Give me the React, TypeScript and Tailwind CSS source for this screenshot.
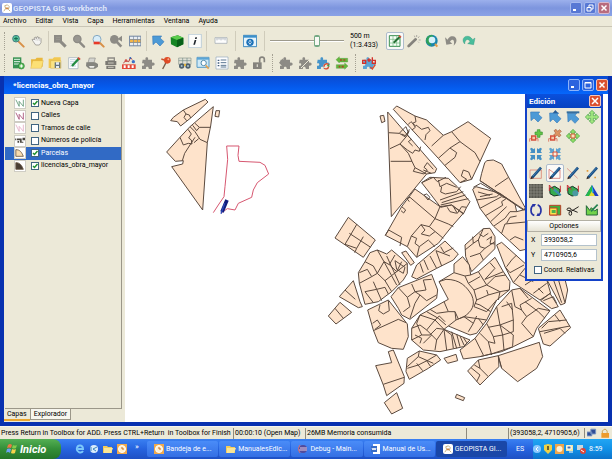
import { useState } from "react";
import type { ReactNode } from "react";

const G = "#8d8b85";

function Svg({ children, size = 14 }: { children: ReactNode; size?: number }) {
  return (
    <svg width={size} height={size} viewBox="0 0 42 42" fill="none" className="block shrink-0" aria-hidden="true">
      {children}
    </svg>
  );
}

function Lens({ ring, glass, handle }: { ring: string; glass: string; handle: string }) {
  return (
    <Svg>
      <path d="M21 23 36 38" stroke={handle} strokeWidth="7" strokeLinecap="round" />
      <circle cx="16" cy="15" r="11" fill={glass} stroke={ring} strokeWidth="4" />
    </Svg>
  );
}

const PUZZLE = "M5 11H14C10 2 24 1 21 11H33V20C43 16 44 31 33 29V39H23C25 30 12 30 15 39H3V29C12 31 12 19 3 22Z";

function Puzzle({ color = G, children }: { color?: string; children?: ReactNode }) {
  return (
    <Svg>
      <path d={PUZZLE} fill={color} />
      {children}
    </Svg>
  );
}

const ArrowNW = ({ y = 0 }: { y?: number }) => (
  <path
    d="M5 6H32L27 12 39 23 27 36 15 24 6 32Z"
    transform={`translate(0 ${y})`}
    fill="#4c9ad6"
    stroke="#3a7dbb"
    strokeWidth="2"
  />
);

const CROSS = "M21 1 30 10H25V17H32V12L41 21 32 30V25H25V32H30L21 41 12 32H17V25H10V30L1 21 10 12V17H17V10H12Z";

const SNAP_ARROWS =
  "M3 5 8 2 14 7 18 3V18H3L7 13ZM39 5 34 2 28 7 24 3V18H39L35 13ZM3 37 8 40 14 35 18 39V24H3L7 29ZM39 37 34 40 28 35 24 39V24H39L35 29Z";

const icons: Record<string, ReactNode> = {
  zoom: (
    <Svg>
      <path d="M22 22 38 38" stroke="#d89048" strokeWidth="6" strokeLinecap="round" />
      <circle cx="15" cy="14" r="10" fill="#58c8a0" stroke="#487c80" strokeWidth="3" />
      <path d="M15 8V20M9 14H21" stroke="#14684c" strokeWidth="3" />
    </Svg>
  ),
  hand: (
    <Svg>
      <path d="M10 23 6 17 10 15 13 18V11L17 9 19 14 21 8 25 9 26 14 30 11 33 14V26L28 33H17Z" fill="#f4f4f2" stroke="#85827c" strokeWidth="2" />
      <path d="M18 14V20M23 14V20M28 15V21" stroke="#98958e" />
    </Svg>
  ),
  zoomGray: (
    <Svg>
      <path d="M3 3H27V26H3Z" fill={G} />
      <path d="M22 22 38 38" stroke={G} strokeWidth="9" />
      <path d="M9 10H21M9 16H21" stroke="#a09e96" strokeWidth="2" />
    </Svg>
  ),
  lensGray: <Lens ring={G} glass="#989690" handle={G} />,
  lensRed: (
    <Svg>
      <path d="M24 24 38 38" stroke="#d89048" strokeWidth="6" strokeLinecap="round" />
      <circle cx="18" cy="16" r="12" fill="#d8edf8" stroke="#85a9c2" strokeWidth="3" />
      <path d="M8 23H26V31H8Z" fill="#e83a28" />
    </Svg>
  ),
  lensPrev: (
    <Svg>
      <path d="M22 22 37 38" stroke={G} strokeWidth="8" />
      <circle cx="16" cy="16" r="13" fill={G} />
      <path d="M39 5 26 14 39 23Z" fill={G} />
    </Svg>
  ),
  table: (
    <Svg>
      <path d="M3 5H39V37H3Z" fill="#7b8da4" />
      <path d="M6 8H16V15H6ZM18 8H27V15H18ZM29 8H37V15H29ZM6 27H16V34H6ZM18 27H27V34H18ZM29 27H37V34H29Z" fill="#e8edf2" />
      <path d="M6 17H16V25H6ZM18 17H27V25H18ZM29 17H37V25H29Z" fill="#f4b548" />
    </Svg>
  ),
  arrow: <Svg><ArrowNW /></Svg>,
  cube: (
    <Svg>
      <path d="M2 10 23 4 40 11V31L21 40 3 31Z" fill="#168524" />
      <path d="M2 10 23 4 40 11 21 18Z" fill="#5ccc4d" />
      <path d="M21 18 40 11V31L21 40Z" fill="#086018" />
    </Svg>
  ),
  info: (
    <Svg>
      <path d="M2 1H40V41H2Z" fill="#fcfcfa" stroke="#a4bdd1" strokeWidth="2" />
      <path d="M22 10H27L26 15H21ZM20 18H25L21 32H16Z" fill="#20262c" />
    </Svg>
  ),
  ruler: (
    <Svg>
      <path d="M3 11H39V28H3Z" fill="#fdfdfd" stroke="#98a3ae" strokeWidth="2" />
      <path d="M9 12V19M15 12V17M21 12V19M27 12V17M33 12V19" stroke="#8b96a1" strokeWidth="2" />
    </Svg>
  ),
  target: (
    <Svg>
      <path d="M1 4H41V38H1Z" fill="#e6f4fc" stroke="#3a86bd" strokeWidth="3" />
      <path d="M2 5H40V11H2Z" fill="#3b90cb" />
      <circle cx="21" cy="25" r="11" fill="#1b71b8" />
      <path d="M21 17 26 25 21 32 16 25Z" fill="#fff" />
      <circle cx="21" cy="25" r="3" fill="#1b71b8" />
    </Svg>
  ),
  editMap: (
    <Svg>
      <path d="M4 5H36V37H4Z" fill="#f8fff6" stroke="#398e50" strokeWidth="3" />
      <path d="M4 16H36M4 27H36M15 5V37M26 5V37" stroke="#70b680" strokeWidth="2" />
      <path d="M17 26 37 7" stroke="#277135" strokeWidth="6" />
      <path d="M33 5 39 10" stroke="#db5341" strokeWidth="5" />
    </Svg>
  ),
  wand: (
    <Svg>
      <path d="M5 36 26 16" stroke="#85837d" strokeWidth="8" strokeLinecap="round" />
      <path d="M29 3V9M37 7 33 12M41 18 35 18M22 5 24 10M36 26 33 23" stroke="#8d8b85" strokeWidth="2" />
    </Svg>
  ),
  globe: (
    <Svg>
      <circle cx="20" cy="20" r="18" fill="#1986ae" />
      <path d="M4 13C11 0 22 2 25 5L14 20 20 35C8 34 0 25 4 13Z" fill="#31a05a" />
      <circle cx="21" cy="18" r="10" fill="#d5f1fa" />
      <path d="M30 30 37 38" stroke="#e49d4c" strokeWidth="6" />
    </Svg>
  ),
  undo: (
    <Svg>
      <path d="M3 10 7 32 25 29 18 23C26 12 33 18 29 35 45 20 36 3 22 7 16 9 13 13 11 17Z" fill={G} />
    </Svg>
  ),
  redo: (
    <Svg>
      <path d="M39 12 35 32 17 29 24 23C19 12 9 15 8 30-3 18 6 4 19 7 26 9 29 13 32 17Z" fill="#49bd9b" stroke="#288d74" />
    </Svg>
  ),
  newMap: (
    <Svg>
      <path d="M6 4H31V37H6Z" fill="#389252" />
      <path d="M9 10H27M9 17H27M9 24H25" stroke="#e5f5e8" strokeWidth="3" />
      <circle cx="31" cy="30" r="9" fill="#5bbd59" stroke="#267b35" strokeWidth="2" />
      <path d="M31 25V35M26 30H36" stroke="#fff" strokeWidth="3" />
    </Svg>
  ),
  folder: (
    <Svg>
      <path d="M3 10H16L20 5H38V32H4Z" fill="#e9b83c" />
      <path d="M2 37 8 14H40L34 37Z" fill="#fce075" stroke="#d7a332" />
    </Svg>
  ),
  folderSave: (
    <Svg>
      <path d="M2 8H14L18 4H38V36H2Z" fill="#f2c850" />
      <path d="M8 14H39V37H8Z" fill="#fae284" stroke="#c69736" />
      <path d="M20 19H37V36H20Z" fill="#66737c" />
      <path d="M24 19H33V26H24ZM24 30H33V36H24Z" fill="#e7edf2" />
    </Svg>
  ),
  editDoc: (
    <Svg>
      <path d="M5 5H33V38H5Z" fill="#fff" stroke="#98a9b7" strokeWidth="2" />
      <path d="M9 11H26M9 17H22M9 23H20M9 30H27" stroke="#a3bfd3" strokeWidth="2" />
      <path d="M15 30 35 8" stroke="#238c43" strokeWidth="7" />
      <path d="M33 5 39 11" stroke="#d04a37" strokeWidth="6" />
    </Svg>
  ),
  print: (
    <Svg>
      <path d="M13 6H31L27 20H9Z" fill="#d4d4cf" stroke={G} strokeWidth="2" />
      <path d="M4 19H30L39 24V32L30 38H12L3 30Z" fill="#85857f" />
      <path d="M12 30H29L26 35H15Z" fill="#eeeeea" />
    </Svg>
  ),
  lockPrint: (
    <Svg>
      <path d="M12 6H31V15H12Z" stroke={G} strokeWidth="4" />
      <path d="M4 15H37V27H4ZM7 29H34V39H7Z" fill="#7b7973" />
      <path d="M12 21H29M12 34H29" stroke="#cbc8bd" strokeWidth="3" />
    </Svg>
  ),
  factory: (
    <Svg>
      <path d="M0 25H41V39H0Z" fill="#e44838" />
      <path d="M5 28H11V36H5ZM17 28H23V36H17ZM29 28H35V36H29Z" fill="#fff" />
      <path d="M4 21 12 14 20 17 25 6 31 10" stroke="#b33838" strokeWidth="3" />
      <circle cx="12" cy="14" r="4" fill="#d3524a" />
      <circle cx="25" cy="6" r="3" fill="#3366b8" />
      <circle cx="34" cy="17" r="5" fill="#3a70c8" />
    </Svg>
  ),
  puzzle: <Puzzle />,
  pin: (
    <Svg>
      <path d="M21 20 11 39" stroke="#785b47" strokeWidth="4" />
      <circle cx="25" cy="13" r="10" fill="#df4b26" />
      <path d="M7 9 16 12" stroke="#c9502e" strokeWidth="4" />
      <circle cx="28" cy="10" r="3" fill="#f6ad8d" />
    </Svg>
  ),
  binoculars: (
    <Svg>
      <path d="M2 6H39V25H2Z" fill="#e1e1d6" stroke="#88948b" strokeWidth="2" />
      <path d="M2 14H39M14 6V24M27 6V24" stroke="#718d88" strokeWidth="2" />
      <circle cx="11" cy="30" r="8" fill="#4d606c" />
      <circle cx="30" cy="30" r="8" fill="#4d606c" />
      <path d="M18 23H24V30H18Z" fill="#dfb542" />
      <circle cx="11" cy="30" r="3" fill="#abc4cd" />
      <circle cx="30" cy="30" r="3" fill="#abc4cd" />
    </Svg>
  ),
  viewMap: (
    <Svg>
      <path d="M3 4H39V34H3Z" fill="#cee9f7" stroke="#579ac8" strokeWidth="3" />
      <path d="M3 6H39V11H3Z" fill="#5ba5d6" />
      <circle cx="23" cy="21" r="8" fill="#fff" stroke="#538bad" strokeWidth="3" />
      <path d="M29 28 38 38" stroke="#e2a354" strokeWidth="5" />
    </Svg>
  ),
  list: (
    <Svg>
      <path d="M3 3H39V39H3Z" fill="#fff" stroke="#93a7bb" strokeWidth="2" />
      <path d="M8 11H13V15H8ZM8 19H13V23H8ZM8 27H13V31H8Z" fill="#405c7c" />
      <path d="M17 12H34M17 20H34M17 28H34M17 33H34" stroke="#5b7692" strokeWidth="3" />
    </Svg>
  ),
  unlock: (
    <Svg>
      <path d="M3 19H29V39H3Z" fill="#85837d" />
      <path d="M23 20V10C23 1 37 1 37 10V19" stroke="#85837d" strokeWidth="5" />
      <path d="M14 25H18V33H14Z" fill="#d8d5ca" />
    </Svg>
  ),
  puzzleLeft: <Puzzle><path d="M0 20 13 6V34Z" fill={G} /></Puzzle>,
  puzzleCut: <Puzzle><path d="M9 36 38 7" stroke="#ece9d8" strokeWidth="3" /></Puzzle>,
  puzzleBlue: (
    <Puzzle color="#4694c9">
      <circle cx="31" cy="31" r="9" fill="#ece9d8" />
      <path d="M24 32C24 22 36 21 38 27M38 31C37 40 27 40 25 36" stroke="#d9492d" strokeWidth="4" />
      <path d="M32 29 40 24V33Z" fill="#3aa047" />
    </Puzzle>
  ),
  swap: (
    <Svg>
      <path d="M3 11 13 2V7H38V18H13V21ZM39 30 29 21V26H4V37H29V40Z" fill="#64b83b" stroke="#448b32" />
      <path d="M15 12H21M25 12H31M11 32H16M20 32H26" stroke="#ad4529" strokeWidth="5" />
    </Svg>
  ),
  abPuzzle: (
    <Puzzle color="#5ba4d3">
      <path d="M2 13H11V22H2ZM31 4V22H40V13H31M16 12H27M21 7V18" stroke="#d53028" strokeWidth="4" />
      <path d="M25 33 31 39 40 26" stroke="#d9492d" strokeWidth="4" />
    </Puzzle>
  ),
  arrowUp: <Svg><ArrowNW y={3} /><path d="M14 10 22 0 31 10Z" fill="#285e96" /></Svg>,
  arrowBar: <Svg><ArrowNW y={4} /><path d="M2 4H40V10H2Z" fill="#356e9d" /></Svg>,
  move: <Svg><path d={CROSS} fill="#a3e780" stroke="#46a246" strokeWidth="2" /></Svg>,
  addVertex: (
    <Svg>
      <path d="M18 9H25V2H33V9H40V17H33V25H25V17H18Z" fill="#65c548" stroke="#389632" strokeWidth="2" />
      <path d="M2 38V29H8M20 29H27V37" stroke="#d54f3b" strokeWidth="2" />
      <path d="M8 21H20V33H8Z" fill="#f3c9a8" stroke="#d54f3b" strokeWidth="4" />
    </Svg>
  ),
  delVertex: (
    <Svg>
      <path d="M18 5 24 1 29 7 35 2 40 7 34 13 39 19 33 24 28 18 22 23 17 18 23 12Z" fill="#dd9362" stroke="#a76244" strokeWidth="2" />
      <path d="M2 38V29H8M20 29H27V37" stroke="#d54f3b" strokeWidth="2" />
      <path d="M8 21H20V33H8Z" fill="#f3c9a8" stroke="#d54f3b" strokeWidth="4" />
    </Svg>
  ),
  moveVertex: (
    <Svg>
      <path d={CROSS} fill="#90dc65" stroke="#46a246" strokeWidth="2" />
      <path d="M15 15H27V27H15Z" fill="#f7e2bd" stroke="#d55737" strokeWidth="3" />
    </Svg>
  ),
  snap: <Svg><path d={SNAP_ARROWS} fill="#438fc4" /></Svg>,
  snapVertex: (
    <Svg>
      <path d={SNAP_ARROWS} fill="#60a3cf" />
      <path d="M15 15H27V27H15Z" fill="#f8f0df" stroke="#d54c38" strokeWidth="3" />
    </Svg>
  ),
  drawRect: <Pen><path d="M3 12H37V37H3Z" stroke="#d96b5a" strokeWidth="2" /></Pen>,
  drawPoly: <Pen><path d="M3 10V37H36V12L20 22Z" stroke="#d35750" strokeWidth="2" /></Pen>,
  drawLine: <Pen><path d="M3 7 35 37M3 37 14 30" stroke="#d97970" strokeWidth="2" /></Pen>,
  drawPoint: <Pen><path d="M5 12H10V17H5ZM28 32H33V37H28Z" fill="#e19b3a" /></Pen>,
  grid: (
    <Svg>
      <path d="M0 0H42V42H0Z" fill="#57574f" />
      <path d="M6 0V42M15 0V42M24 0V42M33 0V42M0 6H42M0 15H42M0 24H42M0 33H42" stroke="#8f8f86" strokeWidth="2" />
    </Svg>
  ),
  snapShape: <Snap />,
  snapShape2: <Snap flip />,
  triangle: (
    <Svg>
      <path d="M21 3 41 36H1Z" fill="#1d3bc7" />
      <path d="M21 3 1 36H21Z" fill="#25b94a" />
      <path d="M21 20 30 36H12Z" fill="#e4dc34" />
      <path d="M21 3 26 23 21 28Z" fill="#29b6d8" />
    </Svg>
  ),
  rotate: (
    <Svg>
      <path d="M16 37C3 33 3 12 14 6M26 5C39 10 39 31 28 37" stroke="#2633a6" strokeWidth="5" />
      <path d="M9 3H21L15 13ZM33 39H22L27 29Z" fill="#2633a6" />
    </Svg>
  ),
  scale: (
    <Svg>
      <path d="M5 7H38V36H5Z" fill="#3fb13c" stroke="#ba4129" strokeWidth="3" />
      <path d="M5 15H27V36H5Z" fill="#f9e44e" stroke="#ba4129" strokeWidth="3" />
      <path d="M11 21H23V30H11Z" fill="#4fb24a" />
    </Svg>
  ),
  scissors: (
    <Svg>
      <path d="M14 26 38 11M16 20 35 28" stroke="#24221e" strokeWidth="3" />
      <ellipse cx="9" cy="19" rx="6" ry="4" stroke="#24221e" strokeWidth="3" />
      <ellipse cx="13" cy="31" rx="4" ry="6" stroke="#24221e" strokeWidth="3" />
    </Svg>
  ),
  chartEdit: (
    <Svg>
      <path d="M4 8V36H37V18L29 24 19 14 14 22Z" fill="#72d34a" stroke="#246839" strokeWidth="3" />
      <path d="M18 25 38 5" stroke="#248250" strokeWidth="5" />
    </Svg>
  ),
};

function Pen({ children }: { children: ReactNode }) {
  return (
    <Svg>
      {children}
      <path d="M10 34 36 5" stroke="#174e85" strokeWidth="8" />
      <path d="M12 30 34 6" stroke="#5893bf" strokeWidth="2" />
      <path d="M4 40 7 31 14 37Z" fill="#302b2b" />
    </Svg>
  );
}

function Snap({ flip = false }: { flip?: boolean }) {
  return (
    <Svg>
      <path d="M5 13 20 7 36 17 34 33 18 36 6 29Z" fill="#36ac50" stroke="#173328" strokeWidth="3" />
      <path d="M4 3V21M4 3 17 17M37 5V24" stroke="#c72f35" strokeWidth="3" />
      {flip ? <circle cx="28" cy="28" r="9" fill="#4a9aa2" /> : <path d="M18 16 38 34" stroke="#3f8fb0" strokeWidth="7" />}
    </Svg>
  );
}

function Tool({ name, label, on = false }: { name: string; label: string; on?: boolean }) {
  return (
    <button
      type="button"
      aria-label={label}
      className={
        on
          ? "flex h-[18px] w-[18px] items-center justify-center rounded-xs border border-[#aebccc] bg-[#fafaf8]"
          : "flex h-[18px] w-[18px] items-center justify-center"
      }
    >
      {icons[name]}
    </button>
  );
}

const Sep = () => <span className="mx-[2px] h-5 w-px bg-[#d0ccbb]" />;
const Grip = () => <span className="mx-1 h-[18px] w-px border-l border-dotted border-[#a5a193]" />;

const windowTools = ["Minimizar", "Maximizar", "Cerrar"];

function WindowButtons({ dim = false }: { dim?: boolean }) {
  return (
    <div className="flex gap-[2px]">
      {windowTools.map((label, i) => (
        <button
          key={label}
          type="button"
          aria-label={label}
          className={
            "flex h-3 w-3 items-center justify-center rounded-xs border " +
            (i === 2
              ? dim
                ? "border-[#d9b7ca] bg-[#b86b7d]"
                : "border-[#f1c3b6] bg-[#dc5130]"
              : dim
                ? "border-[#a6b9ee] bg-[#5878d4]"
                : "border-[#8cb3fa] bg-[#2c63de]")
          }
        >
          <svg width="8" height="8" viewBox="0 0 8 8" stroke="#fff" fill="none" aria-hidden="true">
            {i === 0 && <path d="M1 6H4" strokeWidth="2" />}
            {i === 1 && (dim ? <path d="M3 3V1H7V5H5M1 3.5H5V7H1Z" /> : <path d="M1 1.5H7V7H1ZM1 2H7" />)}
            {i === 2 && <path d="M1.500 1.500 6.500 6.500M6.500 1.500 1.500 6.500" strokeWidth="1.500" />}
          </svg>
        </button>
      ))}
    </div>
  );
}

const layers = [
  { name: "Nueva Capa", color: "#5c9672", on: true },
  { name: "Calles", color: "#a54c75", on: false },
  { name: "Tramos de calle", color: "#e5adc5", on: false },
  { name: "Números de policía", color: "points", on: false },
  { name: "Parcelas", color: "#f8dcae", on: true, selected: true },
  { name: "licencias_obra_mayor", color: "#483d33", on: true },
];

function LayerSwatch({ color }: { color: string }) {
  const area = color === "#f8dcae" || color === "#483d33";
  return (
    <svg width="12" height="12" viewBox="0 0 12 12" className="block border border-[#cfcdc4] bg-white" aria-hidden="true">
      {color === "points" ? (
        <path d="M0 3H1V5H0ZM2 3H6V5H2ZM6 3H8V7H6ZM9 2H12V5H9ZM3 6H5V8H3ZM6 7H10V8H6Z" fill="#4b4840" />
      ) : area ? (
        <path d="M1 2C6 2 8 5 10 10H1Z" fill={color} stroke="#695743" />
      ) : (
        <path d="M1 2 5 10V4L10 10V2" fill="none" stroke={color} />
      )}
    </svg>
  );
}

function Check({ checked, onChange, id }: { checked: boolean; onChange: () => void; id: string }) {
  return (
    <span className="grid shrink-0">
      <input
        id={id}
        type="checkbox"
        checked={checked}
        onChange={onChange}
        className="col-start-1 row-start-1 h-2 w-2 appearance-none border border-[#416581] bg-white"
      />
      {checked && (
        <svg viewBox="0 0 8 8" className="pointer-events-none col-start-1 row-start-1 h-2 w-2" aria-hidden="true">
          <path d="M2 4 3.500 5.500 6.500 2" fill="none" stroke="#229030" strokeWidth="1.500" />
        </svg>
      )}
    </span>
  );
}

function LayerPanel() {
  const [on, setOn] = useState(layers.map((l) => l.on));
  return (
    <aside className="flex w-[121px] shrink-0 flex-col bg-[#ece9d8]">
      <div className="mr-[3px] ml-px flex-1 border-r border-b border-[#9b9789] pt-[3px]">
        <ul className="grid h-[75px] auto-rows-fr">
          {layers.map((l, i) => (
            <li
              key={l.name}
              className={
                l.selected
                  ? "flex items-center gap-[5px] bg-[#316ac5] pl-[9px] text-white"
                  : "flex items-center gap-[5px] pl-[9px] text-black"
              }
            >
              <LayerSwatch color={l.color} />
              <div className="flex items-center gap-[2px]">
                <Check id={`layer-${i}`} checked={on[i]} onChange={() => setOn(on.map((v, j) => (j === i ? !v : v)))} />
                <label htmlFor={`layer-${i}`} className="whitespace-nowrap">{l.name}</label>
              </div>
            </li>
          ))}
        </ul>
      </div>
      <div role="tablist" className="flex h-[13px] items-start">
        <button type="button" role="tab" aria-selected="true" className="h-3 border-b-2 border-[#eaa62e] px-[3px] leading-[11px]">
          Capas
        </button>
        <button type="button" role="tab" aria-selected="false" className="h-[11px] border border-t-0 border-[#9b9789] bg-[#f7f6ef] px-[3px] leading-[9px]">
          Explorador
        </button>
      </div>
    </aside>
  );
}

/* Blocks and plot boundaries are stored on a grid of three units per pixel. */
const westBlocks =
  "M62 92 70 82 100 60 166 28 174 36 122 84 92 108 82 95ZM190 50 182 108 172 158 158 360 65 230 98 222 100 212 76 214 50 186 90 142 120 110ZM198 62 209 62 206 81 195 79Z";
const westLines =
  "M100 60 108 72 118 75 122 84M108 72 102 82 110 92M120 110 135 125 150 148 172 158M148 112H181M135 100 148 112 140 122 128 106M90 142 100 165 115 160 126 162 124 150 116 144 124 132 114 118M135 142 120 165 104 190 97 212M146 146 132 158";

const northBlocks = [
  "M203 66 350 236 345 248 320 252 214 380 205 128Z",
  "M180 78 191 76 195 94 185 98Z",
  "M220 58 230 48 285 78 320 90 370 136 395 125 444 95 512 145 480 215 455 268 420 278 355 205 300 145Z",
  "M500 212 520 210 545 222 566 262 615 352 614 360 480 272 485 250 494 219Z",
  "M458 298 468 290 540 310 585 342 590 365 618 358 618 478 600 482 520 408 480 355Z",
  "M305 278 330 262 385 265 412 290 450 335 440 352 430 372 395 345 362 352 330 310Z",
  "M285 297 360 350 395 345 430 370 395 410 355 460 290 502 262 470 196 436 245 350Z",
  "M45 444 85 382 166 450 130 502Z",
  "M435 465 490 416 510 415 525 440 525 476 455 545 437 500Z",
];
const northLines =
  "M205 128 238 130 250 117M238 130 255 140 267 125M210 176 240 162 262 136 268 118M240 162 265 190 276 214 285 233 320 252M212 214H276M240 162 262 180 278 190 285 180 298 184 302 170M262 136 274 148 265 155 278 168M285 233 280 244 312 252 322 240 312 232 322 218 340 238M310 240 334 250M285 78 288 95 278 100 286 112 276 120M288 105 305 118 325 112 330 122 318 134 315 150M264 104 273 95 288 109M250 117 258 110 264 126 256 137 245 132M370 136 335 168M395 125 420 155 465 188 480 215M355 205 390 174 420 155M390 174 410 188 405 202 375 226M424 258 430 240 446 246 455 268M424 258 440 268 420 278M525 290 566 262M480 272 610 360M460 292 482 280 545 318M474 306 510 316M480 320 518 312M470 330 530 320 540 311M480 355 545 320 560 325M495 378 548 346 545 335 560 325M512 395 560 350M522 408 555 385 570 365 590 365M545 430 555 402 618 396M560 400 570 382 590 378M570 450 585 440 610 450M305 278 340 262 352 275 378 262M355 270 360 290 380 280 410 292M365 290 362 306 376 312 410 305 422 290M360 330 430 305M365 338 436 315M362 345 445 326M398 346 412 370 425 350 440 352M382 352 390 365 410 370M312 315 320 312 330 322 324 330ZM270 322 345 386 360 350M270 322 261 326 268 335M245 350 257 360 251 369 243 362M345 386 385 402 400 410M345 386 328 410 370 445M328 410 303 404 274 438 262 470M303 404 315 420 304 432 328 438 345 425M274 438 290 445 285 460 298 470 325 450 345 470M298 470 290 502M196 436 206 420 245 442 240 468M111 402 75 463M88 430 152 472M75 463 110 475 130 440M110 475 104 488M435 480 460 460 458 440M460 460 475 450 490 416M475 450 480 470 495 475 525 455M450 500 480 490 495 475M480 490 490 510M500 450 515 440 510 460 525 462M478 432 490 440 505 430";

const southBlocks = [
  "M245 38 258 33 283 68 272 76Z",
  "M150 38 172 30 200 42 215 30 262 70 262 100 250 120 215 155 175 185 135 193 118 130 115 98 135 65Z",
  "M275 110 290 75 375 3 415 42 400 60 350 85 290 117Z",
  "M58 170 100 122 120 185 127 200 115 203Z",
  "M25 228 60 187 95 217 48 252Z",
  "M143 210 205 180 262 252 265 290 250 328 215 325 175 308 160 270Z",
  "M213 170 235 143 335 103 353 150 350 175 270 238 245 225 235 205Z",
  "M357 125 402 98 402 72 428 50 448 75 452 105 475 95 525 52 550 95 570 125 568 150 530 180 500 240 470 280 450 285 385 258 372 268 450 300 430 320 360 335 310 330 275 300 275 265 300 225 385 178Z",
  "M530 15 545 7 615 70 680 118 692 160 660 180 580 128 555 80Z",
  "M680 118H735L743 150 735 190 722 195Z",
  "M662 182 690 160 715 200 695 206Z",
  "M420 330 465 295 500 250 530 200 575 150 600 145 690 212 650 265 640 290 580 320 545 335 480 350 430 357Z",
  "M655 265 720 210 752 263 690 318 670 312Z",
  "M535 347 658 307 668 350 650 385 593 425 545 385Z",
  "M443 393 475 360 535 347 537 380 505 410 480 435Z",
  "M372 355 408 343 413 362 383 370Z",
  "M410 463 434 473 430 482 406 473Z",
  "M258 395 262 355 298 333 350 345 362 360 325 385 268 418Z",
  "M167 377 215 368 205 335 220 330 253 410 252 430 200 467 190 435Z",
  "M193 488 230 458 248 505 215 522Z",
];
const southLines =
  "M172 30 192 65 230 135M135 65 160 78 172 100 192 65M118 130 155 110 172 100 195 122 215 155M155 110 142 88 118 98M195 122 230 95 262 70M192 65 208 74 225 45M208 74 230 95 245 65M225 62 255 82 250 100 230 88ZM135 155 170 148 185 182M135 155 160 188M170 148 195 142 205 162M160 125 170 148M200 48 240 135M310 98 300 70M325 90 312 60M350 85 330 48M365 78 348 32 390 48M362 20 372 38 400 24M75 150 106 178M45 205 70 235M180 195 176 212 190 222 208 212 205 182M235 143 262 172 285 155 318 150M262 172 270 200 250 215M285 155 275 132M318 150 310 120 335 118M285 190 300 165 320 182 350 165M285 190 270 235M300 165 285 155M158 250 172 240 182 255 165 268M160 272 235 238 258 248M402 98 435 108 452 105M357 125 378 118C420 118 440 140 455 165 468 195 455 215 432 230L415 237 405 215 385 215 372 185M435 108 445 130 462 150 470 180 462 200M445 130 480 110M462 150 500 135 475 95M500 135 540 155 568 150M495 118 550 95M495 118 525 85 510 68M500 135 525 110 558 105M470 180 505 165 500 150M505 165 540 155 535 180M462 200 500 215 530 180M465 190 480 195 512 215M405 215 408 240 385 258M408 240 432 230 460 250 445 275M432 230 500 240M460 250 470 228M490 255 475 235M300 225 345 240 372 268M320 215 355 235 378 255M345 240 358 228 375 245M330 208 350 220 385 215M275 265 300 255 320 270 345 240M300 225 290 250 305 285 275 300M320 270 335 285 310 310M305 285 330 285 350 265 372 268M335 285 350 300 345 330M350 300 372 268 380 330M372 268 395 285 400 325M395 275 410 325M410 282 420 320M420 288 432 315M430 292 440 308M285 285 305 295 300 310M560 80 575 60 590 45M555 80 570 98 612 75M580 128 615 85 640 115M600 105 640 125M615 135 660 105M640 160 680 130M655 145 670 160M700 118 725 188M715 118 735 188M670 182 700 170 710 190M465 295 490 345M480 280 505 305 515 345M500 250 520 290 525 310 505 305M505 262 540 255 530 200M540 255 548 285 520 290M545 200 575 190 580 240 540 255M560 185 578 210M540 255 580 285 578 318M580 240 580 275 548 285 552 330M575 150 585 200 605 210 600 195 635 175M605 210 620 230 655 205 690 212M620 230 605 250 640 290M615 185 655 215 675 235M600 145 625 175M665 265 685 245 740 240M660 275 750 258M705 225 720 245M672 280 720 265 735 280M475 360 480 385 505 410M453 383 480 405 470 425M463 375 480 385M535 350 545 385M298 333 295 350 340 370M262 380 295 350M262 385 295 375 325 360 350 345M290 370 308 392M320 362 332 380M190 433 253 412M480 350 520 340 580 320";

function TownMap() {
  const ink = { fill: "none", stroke: "#5a493e", strokeWidth: 3, strokeLinejoin: "round" as const };
  return (
    <svg width="483" height="328" viewBox="125 94 483 328" className="block" role="img" aria-label="Parcelas">
      <g transform="translate(150 90) scale(.3333)" {...ink}>
        <path d={westBlocks} fill="#fee3cb" />
        <path d={westLines} />
        <path
          d="M215 368 232 356 255 360 265 340 305 322 310 300 322 278 356 252 345 226 330 217 267 214 264 196 267 168H230L233 208 225 290 222 320 205 345 190 368"
          stroke="#d6566f"
        />
        <path d="M216 366 231 330" stroke="#111c7d" strokeWidth="11" />
        <path d="M213 371 224 340" stroke="#2d49b5" strokeWidth="4" />
      </g>
      <g transform="translate(320 90) scale(.3333)" {...ink}>
        <path d={northBlocks.join("")} fill="#fee3cb" />
        <path d={northLines} />
      </g>
      <g transform="translate(320 240) scale(.3333)" {...ink}>
        <path d={southBlocks.join("")} fill="#fee3cb" />
        <path d={southLines} />
      </g>
    </svg>
  );
}

const palette: ([string, string] | null)[] = [
  ["arrow", "Seleccionar"],
  ["arrowUp", "Seleccionar partes"],
  ["arrowBar", "Seleccionar líneas"],
  ["move", "Mover"],
  ["addVertex", "Insertar vértice"],
  ["delVertex", "Borrar vértice"],
  ["moveVertex", "Mover vértice"],
  null,
  ["snap", "Ajustar"],
  ["snapVertex", "Ajustar vértices"],
  null,
  null,
  ["drawRect", "Dibujar rectángulo"],
  ["drawPoly", "Dibujar polígono"],
  ["drawLine", "Dibujar línea"],
  ["drawPoint", "Dibujar punto"],
  ["grid", "Rejilla"],
  ["snapShape", "Autocompletar"],
  ["snapShape2", "Completar polígono"],
  ["triangle", "Triángulo"],
  ["rotate", "Rotar"],
  ["scale", "Escalar"],
  ["scissors", "Cortar"],
  ["chartEdit", "Editar geometría"],
];

function EditBox() {
  const [relative, setRelative] = useState(false);
  return (
    <section className="absolute top-0 right-[5px] w-[78px] border-2 border-t-0 border-[#1442c8] bg-[#ece9d8]">
      <header className="flex h-[14px] items-center justify-between bg-linear-to-b from-[#0a50dd] to-[#0642c0] pl-[2px]">
        <h2 className="text-[8px] font-bold text-white">Edición</h2>
        <button type="button" aria-label="Cerrar edición" className="flex h-3 w-3 items-center justify-center rounded-xs border border-[#f5c8ba] bg-[#dc5130]">
          <svg width="8" height="8" viewBox="0 0 8 8" stroke="#fff" strokeWidth="1.500" aria-hidden="true">
            <path d="M1 1 7 7M7 1 1 7" />
          </svg>
        </button>
      </header>
      <div className="grid h-[111px] auto-rows-fr grid-cols-4 items-center justify-items-center">
        {palette.map((p, i) => (p ? <Tool key={p[0]} name={p[0]} label={p[1]} on={p[0] === "drawPoly"} /> : <span key={i} />))}
      </div>
      <button type="button" className="mt-px block h-3 w-full border border-[#b3b0a4] bg-linear-to-b from-white to-[#e7e4d6] leading-[10px]">
        Opciones
      </button>
      <div className="flex flex-col gap-[3px] px-1 pt-[2px]">
        <div className="flex items-center gap-1">
          <label htmlFor="cx" className="w-[6px]">X</label>
          <input id="cx" defaultValue="393058,2" className="h-3 w-[56px] border border-[#b4c2cc] bg-white px-[2px]" />
        </div>
        <div className="flex items-center gap-1">
          <label htmlFor="cy" className="w-[6px]">Y</label>
          <input id="cy" defaultValue="4710905,6" className="h-3 w-[56px] border border-[#b4c2cc] bg-white px-[2px]" />
        </div>
      </div>
      <div className="flex h-[18px] items-center justify-center gap-[2px]">
        <Check id="rel" checked={relative} onChange={() => setRelative(!relative)} />
        <label htmlFor="rel">Coord. Relativas</label>
      </div>
    </section>
  );
}

const rowTwo: [string, string][] = [
  ["newMap", "Nuevo mapa"],
  ["folder", "Abrir"],
  ["folderSave", "Guardar"],
  ["editDoc", "Editar"],
  ["print", "Imprimir"],
  ["lockPrint", "Bloquear"],
  ["factory", "Catastro"],
  ["puzzle", "Extensión"],
  ["pin", "Localizar"],
  ["binoculars", "Buscar"],
  ["viewMap", "Vista"],
  ["list", "Atributos"],
  ["puzzle", "Capa"],
  ["unlock", "Desbloquear"],
];

function Logo() {
  return (
    <svg width="10" height="10" viewBox="0 0 11 11" className="rounded-xs bg-white" aria-hidden="true">
      <path d="M2 9 4 6 3 3 6 2 8 4 7 7 9 9" fill="none" stroke="#c0ad7c" />
      <path d="M4 5H7V7H4Z" fill="#d18845" />
    </svg>
  );
}

const tasks: { label: string; icon: ReactNode; active?: boolean }[] = [
  { label: "Bandeja de e...", icon: <Clock /> },
  {
    label: "ManualesEdic...",
    icon: <svg width="10" height="10" viewBox="0 0 10 10" aria-hidden="true"><path d="M0 2H4L5 3H9V9H0Z" fill="#f3cc59" /><path d="M1 4H10L8 9H1Z" fill="#fae698" /></svg>,
  },
  {
    label: "Debug - Main...",
    icon: <svg width="10" height="10" viewBox="0 0 10 10" aria-hidden="true"><circle cx="5" cy="5" r="4" fill="#524b9b" /><path d="M2 4H9M1 6H9" stroke="#e8cde4" /><path d="M2 1 0 5 2 9" stroke="#dc6969" fill="none" /></svg>,
  },
  {
    label: "Manual de Us...",
    icon: <svg width="10" height="10" viewBox="0 0 10 10" aria-hidden="true"><path d="M2 0H9V10H2Z" fill="#fff" /><path d="M0 2H6V8H0Z" fill="#376cc6" /><path d="M1 4 2 6 3 4 4 6 5 4" stroke="#fff" fill="none" /></svg>,
  },
  { label: "GEOPISTA GI...", icon: <Logo />, active: true },
];

function Clock() {
  return (
    <svg width="10" height="10" viewBox="0 0 10 10" aria-hidden="true">
      <path d="M0 0H10V10H0Z" fill="#efa94c" />
      <circle cx="5" cy="5" r="3.500" fill="#fff0cf" stroke="#fff" />
      <path d="M5 3V5H7" fill="none" stroke="#c66b20" />
    </svg>
  );
}

function Browser() {
  return (
    <svg width="10" height="10" viewBox="0 0 10 10" fill="none" aria-hidden="true">
      <path d="M8 7C6 10 1 8 2 4 3 0 8 1 8 5H3" stroke="#7bc8fa" strokeWidth="2" />
    </svg>
  );
}

function Taskbar() {
  return (
    <footer className="flex h-5 bg-linear-to-b from-[#3a80f2] via-[#2663df] to-[#1e50c4] text-white">
      <button type="button" className="flex w-[61px] shrink-0 items-center gap-[2px] rounded-r-lg bg-linear-to-b from-[#54b054] via-[#338e38] to-[#257529] pl-[6px] text-[11px] leading-none font-bold italic">
        <svg width="12" height="12" viewBox="0 0 12 12" aria-hidden="true">
          <path d="M2 2Q4 0 6 2L5 5Q3 4 1 5Z" fill="#ed7544" />
          <path d="M7 2Q9 3 11 2L10 5Q8 6 6 5Z" fill="#83cd4c" />
          <path d="M1 6Q3 5 5 6L4 10Q2 8 0 10Z" fill="#6da2f3" />
          <path d="M6 6Q8 7 10 6L9 10Q7 11 5 10Z" fill="#f6d34b" />
        </svg>
        Inicio
      </button>
      <nav aria-label="Inicio rápido" className="flex w-[86px] shrink-0 items-center gap-1 pl-[14px]">
        <button type="button" aria-label="Internet"><Browser /></button>
        <button type="button" aria-label="Correo">
          <svg width="10" height="10" viewBox="0 0 10 10" aria-hidden="true"><circle cx="5" cy="5" r="4" fill="#d9ecfb" /><path d="M8 3 4 5 7 7M2 3V7" stroke="#3a84bf" fill="none" /></svg>
        </button>
        <button type="button" aria-label="Carpetas">{tasks[1].icon}</button>
        <button type="button" aria-label="Agenda"><Clock /></button>
        <span className="self-start pt-1 pl-1 text-[8px] leading-none">»</span>
      </nav>
      <div className="flex min-w-0 flex-1 gap-px py-[2px]">
        {tasks.map((t) => (
          <button
            key={t.label}
            type="button"
            className={
              t.active
                ? "flex min-w-0 flex-1 items-center gap-[2px] rounded-xs bg-[#1a47a8] pl-[7px] whitespace-nowrap"
                : "flex min-w-0 flex-1 items-center gap-[2px] rounded-xs bg-linear-to-b from-[#4a8cf8] to-[#346fe4] pl-[7px] whitespace-nowrap"
            }
          >
            {t.icon}
            {t.label}
          </button>
        ))}
      </div>
      <div className="flex w-[26px] shrink-0 items-center justify-center">ES</div>
      <div className="flex w-[79px] shrink-0 items-center gap-[2px] bg-linear-to-b from-[#22a5f3] via-[#1191e7] to-[#0d73cb]">
        <svg width="54" height="12" viewBox="0 0 54 12" aria-hidden="true">
          <circle cx="4" cy="6" r="4" fill="#8ac9ff" />
          <path d="M5 4 3 6 5 8" stroke="#fff" fill="none" />
          <path d="M11 2 15 1 19 2V7L15 11 11 7Z" fill="#efd247" />
          <path d="M14 3H16V7H14Z" fill="#6d602c" />
          <path d="M22 1H31V11H22Z" fill="#eca64d" />
          <circle cx="26.500" cy="6" r="3" fill="#fff1d5" />
          <path d="M33 2H40V8H33Z" fill="#eee7aa" />
          <path d="M34 3H38V6H34ZM36 9H40" fill="#486ea8" stroke="#fff" />
          <path d="M44 2H50V7H44Z" fill="#cad8dd" />
          <circle cx="50" cy="8" r="3" fill="#dc4438" />
          <path d="M48 7 51 9" stroke="#fff" />
        </svg>
        8:59
      </div>
    </footer>
  );
}

export default function App() {
  return (
    <div className="flex min-h-screen w-full flex-col bg-[#ece9d8] font-[Roboto,'Liberation_Sans',sans-serif] text-[7px] leading-[9px] text-black">
      <header className="flex h-4 items-center justify-between bg-linear-to-b from-[#9cb0ec] via-[#7d95de] to-[#8aa2e6] pr-[2px] pl-[2px]">
        <div className="flex items-center gap-px">
          <Logo />
          <h1 className="text-[8px] font-bold text-[#dfe6fa]">GEOPISTA GIS workbench</h1>
        </div>
        <WindowButtons dim />
      </header>

      <nav aria-label="Principal" className="flex h-[11px] items-center gap-[9px] border-b border-[#c9c5b5] pl-[3px]">
        {["Archivo", "Editar", "Vista", "Capa", "Herramientas", "Ventana", "Ayuda"].map((m) => (
          <button key={m} type="button">{m}</button>
        ))}
      </nav>

      <div className="flex h-[27px] items-center">
        <Grip />
        <div className="flex w-[37px] justify-between"><Tool name="zoom" label="Zoom" /><Tool name="hand" label="Desplazar" /></div>
        <Sep />
        <div className="flex w-[93px] justify-between">
          <Tool name="zoomGray" label="Zoom a ventana" />
          <Tool name="lensGray" label="Zoom a capa" />
          <Tool name="lensRed" label="Zoom a selección" />
          <Tool name="lensPrev" label="Zoom anterior" />
          <Tool name="table" label="Tabla" />
        </div>
        <Sep />
        <div className="flex w-[55px] justify-between">
          <Tool name="arrow" label="Seleccionar entidades" />
          <Tool name="cube" label="Elementos" />
          <Tool name="info" label="Información" />
        </div>
        <Sep />
        <div className="flex w-6 justify-center"><Tool name="ruler" label="Medir" /></div>
        <Sep />
        <div className="flex w-6 justify-center"><Tool name="target" label="Centrar" /></div>
        <Sep />
        <div className="flex items-center gap-[6px] pl-[3px]">
          <input
            type="range"
            aria-label="Escala"
            defaultValue={65}
            className="h-4 w-[74px] appearance-none bg-transparent [&::-webkit-slider-runnable-track]:h-[2px] [&::-webkit-slider-runnable-track]:border-t [&::-webkit-slider-runnable-track]:border-[#9d9a8c] [&::-webkit-slider-runnable-track]:bg-white [&::-webkit-slider-thumb]:-mt-[6px] [&::-webkit-slider-thumb]:h-3 [&::-webkit-slider-thumb]:w-[6px] [&::-webkit-slider-thumb]:appearance-none [&::-webkit-slider-thumb]:rounded-xs [&::-webkit-slider-thumb]:border [&::-webkit-slider-thumb]:border-y-2 [&::-webkit-slider-thumb]:border-[#75a984] [&::-webkit-slider-thumb]:bg-[#f8f8f4]"
          />
          <div className="w-[30px] whitespace-nowrap">
            <p>500 m</p>
            <p>(1:3.433)</p>
          </div>
        </div>
        <div className="ml-[6px] flex w-[92px] justify-between">
          <Tool name="editMap" label="Editar mapa" on />
          <Tool name="wand" label="Varita" />
          <Tool name="globe" label="Mundo" />
          <Tool name="undo" label="Deshacer" />
          <Tool name="redo" label="Rehacer" />
        </div>
      </div>

      <div className="flex h-[22px] items-start">
        <Grip />
        <div className="flex w-[259px] justify-between">
          {rowTwo.map(([n, l]) => <Tool key={l} name={n} label={l} />)}
        </div>
        <Grip />
        <div className="flex w-[74px] justify-between">
          <Tool name="puzzleLeft" label="Anterior" />
          <Tool name="puzzleCut" label="Dividir" />
          <Tool name="puzzleBlue" label="Actualizar" />
          <Tool name="swap" label="Intercambiar" />
        </div>
        <Grip />
        <Tool name="abPuzzle" label="Unir atributos" />
      </div>

      <main className="flex flex-1 flex-col border-x-4 border-b-4 border-[#0831b0] bg-[#0831b0]">
        <header className="flex h-[18px] items-center justify-between bg-linear-to-b from-[#0b4bd0] via-[#0557e8] to-[#0667fb] pl-[9px]">
          <h2 className="text-[8px] font-bold text-white">*licencias_obra_mayor</h2>
          <WindowButtons />
        </header>
        <div className="flex flex-1">
          <LayerPanel />
          <div className="relative min-w-0 flex-1 overflow-hidden bg-white">
            <TownMap />
            <EditBox />
          </div>
        </div>
      </main>

      <div role="status" className="flex h-[13px] items-center border-t border-[#f7f5ec] leading-[11px] whitespace-nowrap">
        <span className="w-[233px] overflow-hidden pl-px">Press Return in Toolbox for ADD. Press CTRL+Return&nbsp; in Toolbox for Finish</span>
        <span className="w-[72px] border-l border-[#8e8b7e] pl-px">00:00:10 (Open Map)</span>
        <span className="flex-1 border-l border-[#8e8b7e] pl-px">26MB Memoria consumida</span>
        <span className="h-[11px] w-[42px] border-l border-[#8e8b7e]" />
        <span className="w-[76px] border-l border-[#8e8b7e] pl-px">(393058,2, 4710905,6)</span>
        <span className="flex w-[28px] items-center justify-between border-l border-[#8e8b7e] px-[2px]">
          <svg width="24" height="10" viewBox="0 0 24 10" aria-hidden="true">
            <path d="M0 4H5V8H0ZM4 1H9V6H4Z" fill="#304d96" stroke="#7894c2" />
            <path d="M16 5V3Q19-1 21 3V5" fill="none" stroke="#d0a24a" />
            <path d="M15 5H23V10H15Z" fill="#ed9b2d" />
          </svg>
        </span>
      </div>

      <Taskbar />
    </div>
  );
}
